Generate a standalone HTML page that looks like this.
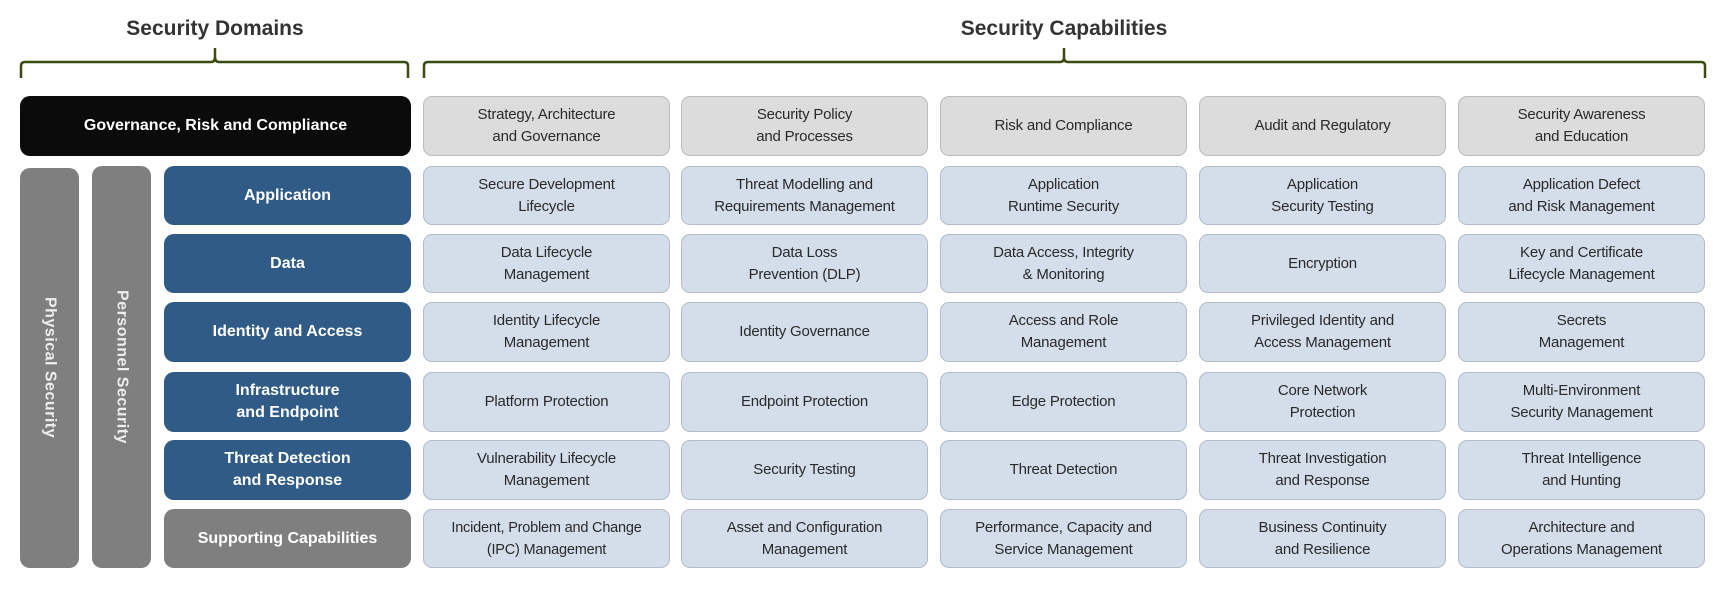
<!DOCTYPE html>
<html><head><meta charset="utf-8"><style>
html,body{margin:0;padding:0;background:#fff;width:1731px;height:607px;overflow:hidden;position:relative;font-family:"Liberation Sans",sans-serif}
.b{position:absolute;box-sizing:border-box;display:flex;align-items:center;justify-content:center;text-align:center;border-radius:9px;line-height:22px}
.c{background:#d3deea;border:1.5px solid #b3bcc6;color:#2a2a2a;font-size:15px;letter-spacing:-0.2px}
.g{background:#dcdcdc;border:1.5px solid #bcbcbc}
.d{background:#2f5b86;color:#fff;font-weight:bold;font-size:16px;border-radius:10px}
.t{position:absolute;font-weight:bold;font-size:21px;color:#333;transform:translateX(-50%);top:17px;white-space:nowrap}
.v{position:absolute;background:#7f7f7f;border-radius:10px;color:#eee;font-weight:bold;font-size:16px;display:flex;align-items:center;justify-content:center}
.v span{writing-mode:vertical-rl;letter-spacing:0.5px}
</style></head><body>
<div class="t" style="left:215px">Security Domains</div>
<div class="t" style="left:1064px">Security Capabilities</div>
<svg width="1731" height="100" style="position:absolute;left:0;top:0" fill="none" stroke="#3b4a12" stroke-width="2.5">
<path d="M21 78 V66 Q21 62 25 62 H211 Q215 62 215 57 V48 M215 57 Q215 62 219 62 H404 Q408 62 408 66 V78"/>
<path d="M424 78 V66 Q424 62 428 62 H1060 Q1064 62 1064 57 V48 M1064 57 Q1064 62 1068 62 H1701 Q1705 62 1705 66 V78"/>
</svg>
<div class="b" style="left:20px;top:96px;width:391px;height:60px;background:#0b0b0b;color:#fff;font-weight:bold;font-size:16px;border-radius:10px">Governance, Risk and Compliance</div>
<div class="v" style="left:20px;top:168px;width:59px;height:400px"><span>Physical Security</span></div>
<div class="v" style="left:92px;top:166px;width:59px;height:402px"><span>Personnel Security</span></div>

<div class="b d" style="left:164px;top:166px;width:247px;height:59px">Application</div>
<div class="b d" style="left:164px;top:234px;width:247px;height:59px">Data</div>
<div class="b d" style="left:164px;top:302px;width:247px;height:60px">Identity and Access</div>
<div class="b d" style="left:164px;top:372px;width:247px;height:60px">Infrastructure<br>and Endpoint</div>
<div class="b d" style="left:164px;top:440px;width:247px;height:60px">Threat Detection<br>and Response</div>
<div class="b d" style="left:164px;top:509px;width:247px;height:59px;background:#7f7f7f">Supporting Capabilities</div>

<!-- row 0 -->
<div class="b c g" style="left:423px;top:96px;width:247px;height:60px">Strategy, Architecture<br>and Governance</div>
<div class="b c g" style="left:681px;top:96px;width:247px;height:60px">Security Policy<br>and Processes</div>
<div class="b c g" style="left:940px;top:96px;width:247px;height:60px">Risk and Compliance</div>
<div class="b c g" style="left:1199px;top:96px;width:247px;height:60px">Audit and Regulatory</div>
<div class="b c g" style="left:1458px;top:96px;width:247px;height:60px">Security Awareness<br>and Education</div>
<!-- row 1 -->
<div class="b c" style="left:423px;top:166px;width:247px;height:59px">Secure Development<br>Lifecycle</div>
<div class="b c" style="left:681px;top:166px;width:247px;height:59px">Threat Modelling and<br>Requirements Management</div>
<div class="b c" style="left:940px;top:166px;width:247px;height:59px">Application<br>Runtime Security</div>
<div class="b c" style="left:1199px;top:166px;width:247px;height:59px">Application<br>Security Testing</div>
<div class="b c" style="left:1458px;top:166px;width:247px;height:59px">Application Defect<br>and Risk Management</div>
<!-- row 2 -->
<div class="b c" style="left:423px;top:234px;width:247px;height:59px">Data Lifecycle<br>Management</div>
<div class="b c" style="left:681px;top:234px;width:247px;height:59px">Data Loss<br>Prevention (DLP)</div>
<div class="b c" style="left:940px;top:234px;width:247px;height:59px">Data Access, Integrity<br>&amp; Monitoring</div>
<div class="b c" style="left:1199px;top:234px;width:247px;height:59px">Encryption</div>
<div class="b c" style="left:1458px;top:234px;width:247px;height:59px">Key and Certificate<br>Lifecycle Management</div>
<!-- row 3 -->
<div class="b c" style="left:423px;top:302px;width:247px;height:60px">Identity Lifecycle<br>Management</div>
<div class="b c" style="left:681px;top:302px;width:247px;height:60px">Identity Governance</div>
<div class="b c" style="left:940px;top:302px;width:247px;height:60px">Access and Role<br>Management</div>
<div class="b c" style="left:1199px;top:302px;width:247px;height:60px">Privileged Identity and<br>Access Management</div>
<div class="b c" style="left:1458px;top:302px;width:247px;height:60px">Secrets<br>Management</div>
<!-- row 4 -->
<div class="b c" style="left:423px;top:372px;width:247px;height:60px">Platform Protection</div>
<div class="b c" style="left:681px;top:372px;width:247px;height:60px">Endpoint Protection</div>
<div class="b c" style="left:940px;top:372px;width:247px;height:60px">Edge Protection</div>
<div class="b c" style="left:1199px;top:372px;width:247px;height:60px">Core Network<br>Protection</div>
<div class="b c" style="left:1458px;top:372px;width:247px;height:60px">Multi-Environment<br>Security Management</div>
<!-- row 5 -->
<div class="b c" style="left:423px;top:440px;width:247px;height:60px">Vulnerability Lifecycle<br>Management</div>
<div class="b c" style="left:681px;top:440px;width:247px;height:60px">Security Testing</div>
<div class="b c" style="left:940px;top:440px;width:247px;height:60px">Threat Detection</div>
<div class="b c" style="left:1199px;top:440px;width:247px;height:60px">Threat Investigation<br>and Response</div>
<div class="b c" style="left:1458px;top:440px;width:247px;height:60px">Threat Intelligence<br>and Hunting</div>
<!-- row 6 -->
<div class="b c" style="left:423px;top:509px;width:247px;height:59px;font-size:14.5px">Incident, Problem and Change<br>(IPC) Management</div>
<div class="b c" style="left:681px;top:509px;width:247px;height:59px">Asset and Configuration<br>Management</div>
<div class="b c" style="left:940px;top:509px;width:247px;height:59px">Performance, Capacity and<br>Service Management</div>
<div class="b c" style="left:1199px;top:509px;width:247px;height:59px">Business Continuity<br>and Resilience</div>
<div class="b c" style="left:1458px;top:509px;width:247px;height:59px">Architecture and<br>Operations Management</div>
</body></html>
